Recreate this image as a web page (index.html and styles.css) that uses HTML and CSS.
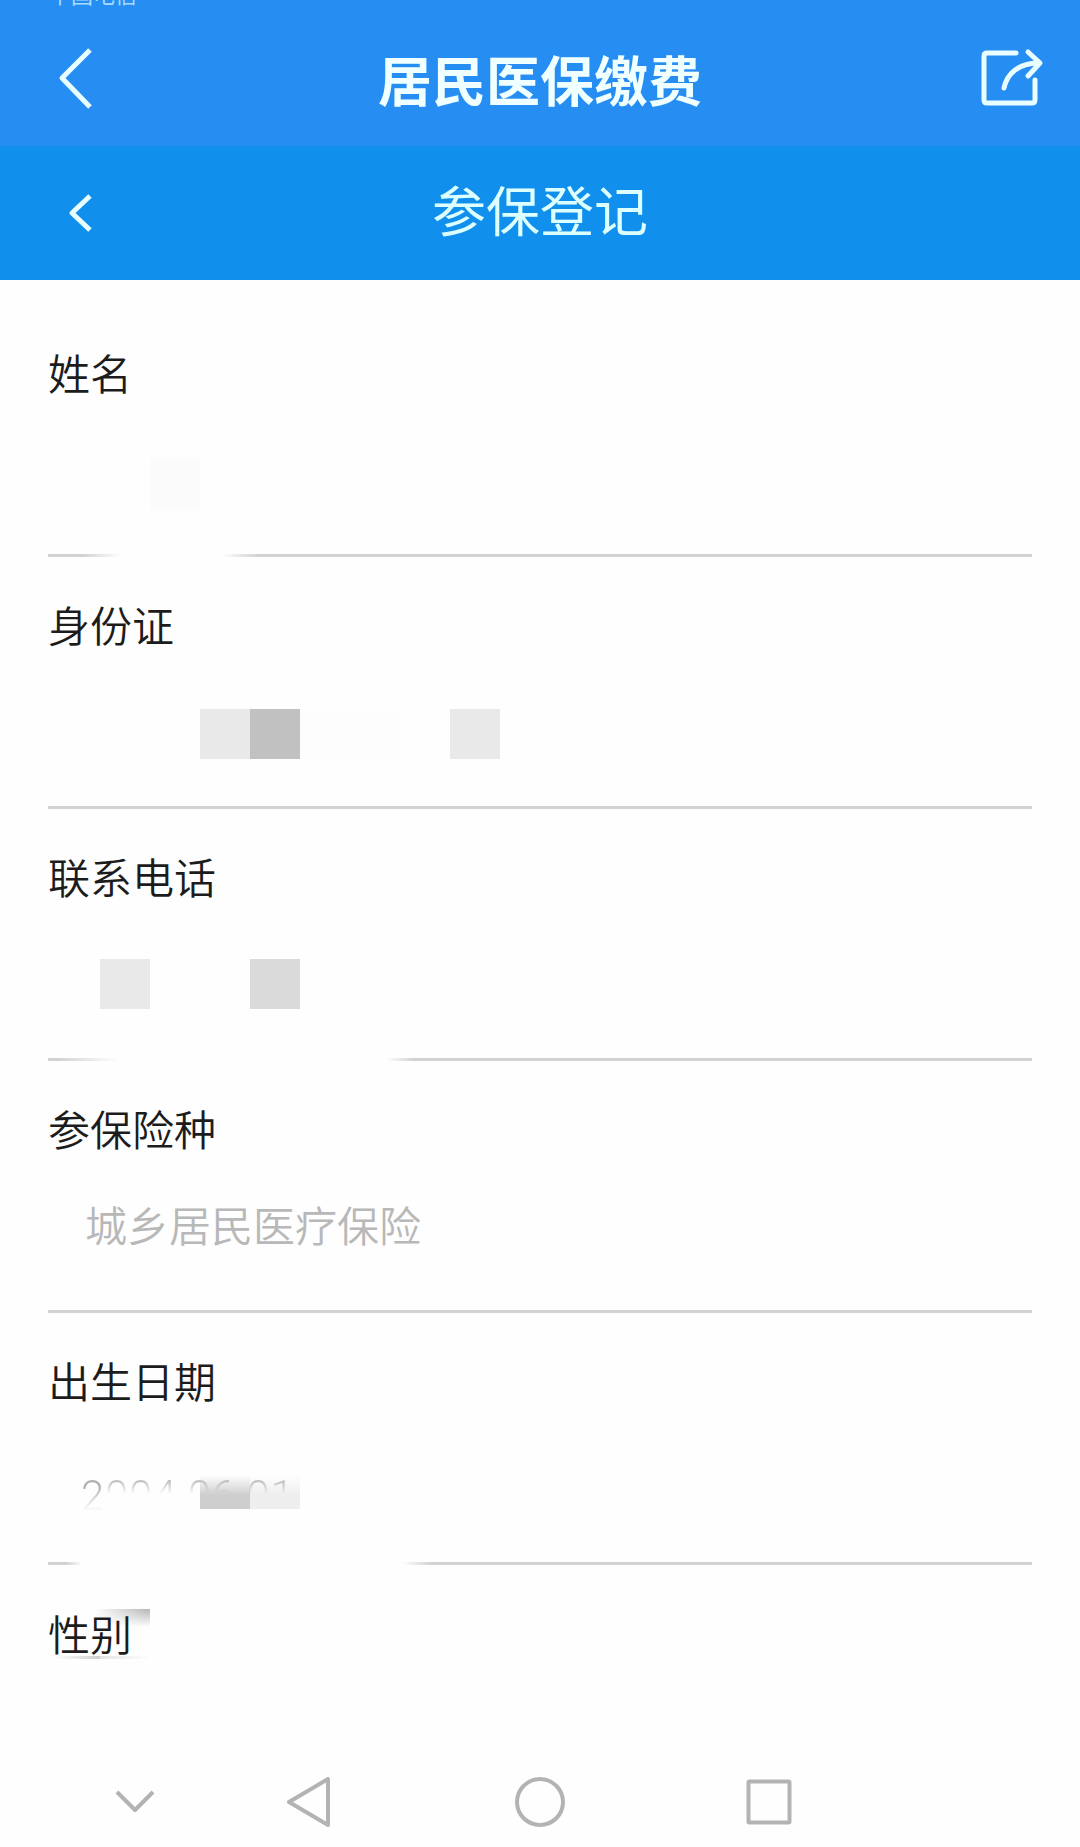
FILE: index.html
```html
<!DOCTYPE html>
<html lang="zh-CN">
<head>
    <meta charset="UTF-8">
    <meta name="viewport" content="width=device-width, initial-scale=1.0">
    <title>居民医保缴费</title>
    <link rel="stylesheet" href="styles.css">
</head>
<body>
    <header class="app-bar">
        <span class="carrier">中国电信</span>
        <svg class="back" width="36" height="64" viewBox="0 0 36 64">
            <path d="M33 4 L5 32 L33 61"/>
        </svg>
        <h1>居民医保缴费</h1>
        <svg class="share" width="64" height="60" viewBox="0 0 64 60">
            <path d="M36 6 H7 Q4 6 4 9 V53 Q4 56 7 56 H52 Q55 56 55 53 V33"/>
            <path d="M24 41 C27 27 38 16 59 16"/>
            <path d="M48 5 L60 16 L48 29"/>
        </svg>
    </header>

    <div class="sub-bar">
        <svg class="back" width="26" height="40" viewBox="0 0 26 40">
            <path d="M23 3 L5 20 L23 37"/>
        </svg>
        <h2>参保登记</h2>
    </div>

    <main class="form">
        <div class="field name">
            <label>姓名</label>
            <div class="mosaic"><i></i><i></i><i></i><i class="g1"></i></div>
        </div>
        <div class="field">
            <label>身份证</label>
            <div class="mosaic"><i></i><i></i><i></i><i></i><i class="g3"></i><i class="g5"></i><i class="g0"></i><i class="g0"></i><i></i><i class="g3"></i></div>
        </div>
        <div class="field phone">
            <label>联系电话</label>
            <div class="mosaic"><i></i><i></i><i class="g3"></i><i></i><i></i><i class="g4"></i></div>
        </div>
        <div class="field">
            <label>参保险种</label>
            <div class="value">城乡居民医疗保险</div>
        </div>
        <div class="field birth">
            <label>出生日期</label>
            <div class="date"><span class="first">2</span><span class="rest">004.06.01</span></div>
        </div>
        <div class="field sex">
            <label>性别</label>
        </div>
    </main>

    <nav class="nav-bar">
        <svg width="50" height="60" viewBox="0 0 50 60">
            <path d="M7 20 L25 38 L43 20"/>
        </svg>
        <svg width="50" height="60" viewBox="0 0 50 60">
            <path d="M45 7 V53 L6 30 Z"/>
        </svg>
        <svg width="60" height="60" viewBox="0 0 60 60">
            <circle cx="30" cy="30" r="23"/>
        </svg>
        <svg width="50" height="60" viewBox="0 0 50 60">
            <rect x="4.500" y="9.500" width="41" height="41" rx="1"/>
        </svg>
    </nav>
</body>
</html>
```
FILE: styles.css
```css
* {
    box-sizing: border-box;
}
body {
    margin: 0;
    height: 1847px;
    display: flex;
    flex-direction: column;
    overflow: hidden;
    background: #fefefe;
    color: #1c1c1c;
    font-family: "Noto Sans CJK SC", sans-serif;
}
svg {
    display: block;
    fill: none;
    stroke: #e9ffff;
    stroke-width: 5;
    stroke-linejoin: round;
}
h1, h2 {
    margin: 0;
    font-size: 54px;
    line-height: 60px;
    color: #f0ffff;
}
h2 {
    font-weight: 400;
    color: #dcffff;
}

/* top bars */
.app-bar {
    position: relative;
    flex: none;
    height: 146px;
    padding: 10px 36px 0 57px;
    display: grid;
    grid-template-columns: 64px 1fr 64px;
    align-items: center;
    background: #268df3;
    text-align: center;
}
.app-bar h1 {
    padding: 2px 21px 0 0;
}
.carrier {
    position: absolute;
    left: 49px;
    top: -18px;
    font-size: 22px;
    line-height: 22px;
    color: #a8dcff;
}
.app-bar .share {
    margin-bottom: 2px;
    stroke-linecap: round;
}
.sub-bar {
    flex: none;
    height: 134px;
    padding: 0 67px;
    display: grid;
    grid-template-columns: 26px 1fr 26px;
    align-items: center;
    background: #118fec;
    text-align: center;
}
.sub-bar h2 {
    margin-top: -8px;
}

/* form */
.form {
    flex: 1;
    min-height: 0;
    padding: 25px 48px 0;
}
.field {
    height: 252px;
    display: flex;
    flex-direction: column;
    font-size: 42px;
    font-weight: 350;
}
.field::after {
    content: "";
    height: 3px;
    margin-top: auto;
    background: #d2d2d2;
}
.field label {
    height: 60px;
    margin-top: 37px;
    line-height: 60px;
}
.value {
    margin-top: 36px;
    padding-left: 37px;
    line-height: 60px;
    color: #b8b8b8;
}
.name::after {
    background: linear-gradient(to right, #d2d2d2 35px, transparent 72px, transparent 174px, #d2d2d2 210px);
}
.phone::after {
    background: linear-gradient(to right, #d2d2d2 10px, transparent 70px, transparent 338px, #d2d2d2 366px);
}
.birth::after {
    background: linear-gradient(to right, #d2d2d2 18px, transparent 34px, transparent 354px, #d2d2d2 384px);
}
.sex {
    height: 150px;
}
.sex::after {
    display: none;
}

/* hidden personal data */
.mosaic {
    display: flex;
    margin-top: 55px;
    margin-left: -48px;
}
.name .mosaic {
    margin-top: 57px;
}
.phone .mosaic {
    margin-top: 53px;
}
.mosaic i {
    width: 50px;
    height: 50px;
}
.mosaic i:first-child {
    width: 50px;
    margin-right: -50px;
}
.mosaic i:nth-child(2) {
    width: 100px;
}
.g0 { background: #fdfdfd; }
.g1 { background: #fbfbfb; }
.g3 { background: #e9e9e9; }
.g4 { background: #dadada; }
.g5 { background: #c1c1c1; }

.date {
    width: 252px;
    height: 34px;
    margin-top: 65px;
    padding-left: 33px;
    font-family: Roboto, sans-serif;
    font-weight: 300;
    line-height: 42px;
    letter-spacing: 0.7px;
    white-space: nowrap;
    background:
        linear-gradient(#fefefe, #cecece 20px) 152px 0 / 50px 34px no-repeat,
        linear-gradient(#fefefe, #eeeeee 20px) 202px 0 / 50px 34px no-repeat;
}
.date span {
    color: transparent;
    -webkit-background-clip: text;
    background-clip: text;
}
.date .first {
    background-image: linear-gradient(#b0b0b0 14px, #fefefe 40px);
}
.date .rest {
    background-image: linear-gradient(#c0c0c0 10px, transparent 23px);
}

.sex label {
    width: 102px;
    height: 50px;
    margin-top: 44px;
    line-height: 48px;
    background:
        linear-gradient(100deg, #fefefe 10%, transparent 90%) 40px 0 / 62px 18px no-repeat,
        linear-gradient(#b8b8b8, #fefefe) 40px 0 / 62px 18px no-repeat,
        linear-gradient(to right, transparent, #cfcfcf) 6px 47px / 46px 3px no-repeat,
        linear-gradient(to right, #e4e4e4, transparent) 52px 47px / 50px 3px no-repeat;
}

/* phone buttons */
.nav-bar {
    flex: none;
    height: 75px;
    padding: 0 286px 0 110px;
    display: grid;
    grid-template-columns: 173px 227px 234px 50px;
    align-items: start;
}
.nav-bar svg {
    stroke: #b3b3b3;
    stroke-width: 4;
}
```
